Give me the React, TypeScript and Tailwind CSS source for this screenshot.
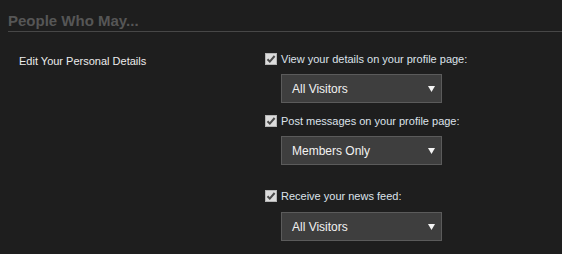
import React from "react";

function Check() {
  return (
    <span className="flex h-[12px] w-[12px] shrink-0 items-center justify-center border border-[#b5b5b5] bg-[#dcdcdc]">
      <svg width="10" height="10" viewBox="0 0 10 10">
        <path d="M1.5 5.2 L3.8 7.6 L8.6 2" fill="none" stroke="#4a4a4a" strokeWidth="2" />
      </svg>
    </span>
  );
}

function Select({ value }: { value: string }) {
  return (
    <div className="ml-[16px] flex h-[29px] w-[161px] items-center justify-between border border-[#5b5b5b] bg-[#3e3e3e] pl-[10px] pr-[6px]">
      <span className="text-[12px] leading-[14px] text-[#f2f2f2]">{value}</span>
      <svg width="7" height="6" viewBox="0 0 7 6">
        <path d="M0 0 H7 L3.5 6 Z" fill="#f5f5f5" />
      </svg>
    </div>
  );
}

function Row({ label }: { label: string }) {
  return (
    <div className="flex items-start gap-[4px]">
      <Check />
      <span className="text-[11px] leading-[13px] text-[#dde2ea]">{label}</span>
    </div>
  );
}

export default function App() {
  return (
    <div
      className="h-[254px] w-[562px] overflow-hidden bg-[#1e1e1e] pl-[8px]"
      style={{ fontFamily: '"Liberation Sans", Arial, sans-serif' }}
    >
      <div className="border-b border-[#474747] pt-[12px] pb-[1px] text-[15px] font-bold leading-[18px] text-[#565656]">
        People Who May...
      </div>
      <div className="mt-[21px] flex">
        <div className="mt-[2px] w-[257px] pl-[11px] text-[11px] leading-[13px] text-[#ececec]">
          Edit Your Personal Details
        </div>
        <div className="flex flex-col">
          <Row label="View your details on your profile page:" />
          <div className="mt-[8px]">
            <Select value="All Visitors" />
          </div>
          <div className="mt-[12px]">
            <Row label="Post messages on your profile page:" />
          </div>
          <div className="mt-[8px]">
            <Select value="Members Only" />
          </div>
          <div className="mt-[25px]">
            <Row label="Receive your news feed:" />
          </div>
          <div className="mt-[9px]">
            <Select value="All Visitors" />
          </div>
        </div>
      </div>
    </div>
  );
}
